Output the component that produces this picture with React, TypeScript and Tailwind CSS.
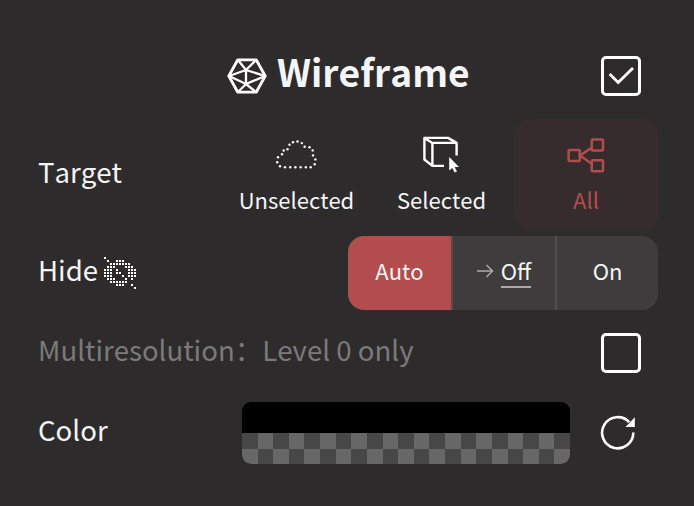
const EYE_OFF = [
  '#..........',
  '.#..###....',
  '..#######..',
  '.###.. ###.',
  '###.#...###',
  '###.##..###',
  '###...#.###',
  '.###...#.#.',
  '..######...',
  '....###..#.',
  '..........#',
];

function WireframeIcon() {
  return (
    <svg className="h-[36px] w-[40px]" viewBox="0 0 40 36" fill="none" stroke="#fff" strokeWidth="2.8" strokeLinejoin="round">
      <path d="M10.8 1.8H29.2L38.2 18L29.2 34.2H10.8L1.8 18Z" />
      <path strokeWidth="2.3" d="M11 2L19 12L29 2M11 34L19 26L29 34M2 18L19 12L38 18L19 26ZM19 12V26" />
    </svg>
  );
}

function CloudIcon() {
  const dots = [
    [21.5, 2.5], [17, 3.2], [13.5, 5.8], [11.5, 10.2], [7.7, 11.5], [6, 15.3], [2, 18.2], [1.2, 23.2], [4, 27.3], [9, 28.3],
    [14.2, 28.3], [19.4, 28.3], [24.6, 28.3], [29.8, 28.3], [34.7, 28.2], [38.7, 25.3], [39.4, 20.4], [37, 16.4],
    [36.7, 11.4], [33.5, 8.2], [28.6, 7.7], [25.8, 4.1],
  ];
  return (
    <svg className="h-[32px] w-[41px]" viewBox="0 0 41 32" fill="#fff">
      {dots.map(([x, y]) => <circle key={`${x}-${y}`} cx={x} cy={y} r="1.2" />)}
    </svg>
  );
}

function CubeIcon() {
  return (
    <svg className="h-[38px] w-[38px]" viewBox="0 0 38 38" fill="none" stroke="#fff" strokeWidth="2.4" strokeLinejoin="round">
      <path d="M33.6 19.5V6.9L25 1.9H1.4V23.5L9.4 29.9H21M1.4 1.9L9.4 6.9H33.6M9.4 6.9V29.9" />
      <path d="M26.2 21V34.6L29.3 32L31.6 36.6L34 35.5L31.6 31H36Z" fill="#fff" stroke="none" />
    </svg>
  );
}

function NodesIcon() {
  return (
    <svg className="h-[36px] w-[38px]" viewBox="0 0 38 36" fill="none" stroke="#b34d4d" strokeWidth="2.5">
      <rect x="1.6" y="12" width="11.2" height="11" rx="1" />
      <rect x="24.8" y="1.6" width="11.2" height="11" rx="1" />
      <rect x="24.8" y="22.2" width="11.2" height="11" rx="1" />
      <path d="M25 9.5L13 17.5L25 26" />
    </svg>
  );
}

function EyeOffIcon() {
  return (
    <svg className="h-[34px] w-[34px]" viewBox="0 0 34 34" fill="#fff" shapeRendering="crispEdges">
      {EYE_OFF.flatMap((row, y) =>
        row.split('').map((c, x) =>
          c === '#' ? <rect key={`${x}-${y}`} x={x * 3} y={y * 3} width="2" height="2" /> : null,
        ),
      )}
    </svg>
  );
}

function Checkbox({ checked }: { checked?: boolean }) {
  return (
    <span className="flex h-[40px] w-[40px] items-center justify-center rounded-[5px] border-[3px] border-white">
      {checked && (
        <svg className="h-[20px] w-[27px]" viewBox="0 0 27 20" fill="none" stroke="#fff" strokeWidth="2.8">
          <path d="M1.7 8L10.2 16.5L25 2" />
        </svg>
      )}
    </span>
  );
}

function ResetIcon() {
  return (
    <svg className="h-[36px] w-[36px]" viewBox="0 0 36 36" fill="none" stroke="#fff" strokeWidth="2.6">
      <path d="M33.3 17.5A15.6 15.6 0 1 1 29.2 7.2" />
      <path d="M34.8 2.3V12H25.5Z" fill="#fff" stroke="none" />
    </svg>
  );
}

export default function App() {
  return (
    <div className="h-[506px] w-[694px] overflow-hidden bg-[#2e2b2c] pr-[36px] pl-[38px] font-['Noto_Sans_CJK_SC','Noto_Sans',sans-serif] text-[27.6px] text-[#f5f5f5] [font-kerning:none]">
      <header className="flex h-[119px] items-start justify-between pt-[56px] pr-[17px]">
        <div className="ml-[189px] flex items-start">
          <span className="mt-[2px]"><WireframeIcon /></span>
          <h1 className="-mt-[13px] ml-[10px] text-[37.2px] leading-[56px] font-bold whitespace-nowrap">Wireframe</h1>
        </div>
        <Checkbox checked />
      </header>

      <section className="flex h-[117px]">
        <span className="w-[186px] pt-[32px] leading-[40px]">Target</span>
        <div className="flex h-[111px] flex-1 text-[22px]">
          <div className="flex w-[145px] flex-col items-center pt-[20px]">
            <CloudIcon />
            <span className="mt-[11px] leading-[34px]">Unselected</span>
          </div>
          <div className="flex w-[145px] flex-col items-center pt-[17px]">
            <CubeIcon />
            <span className="mt-[8px] leading-[34px]">Selected</span>
          </div>
          <div className="flex w-[144px] flex-col items-center rounded-[16px] bg-[#372c2d] pt-[19px] text-[#b34d4d]">
            <NodesIcon />
            <span className="mt-[8px] leading-[34px]">All</span>
          </div>
        </div>
      </section>

      <section className="flex h-[74px] justify-between">
        <div className="flex pt-[13px] leading-[40px]">
          <span className="w-[66px]">Hide</span>
          <span className="pt-[8px]"><EyeOffIcon /></span>
        </div>
        <div className="flex w-[310px] overflow-hidden rounded-[16px] bg-[#3e3c3d] text-[22px]">
          <span className="flex w-[103px] items-center justify-center bg-[#b34d4d] pb-[5px]">Auto</span>
          <span className="flex w-[104px] items-center justify-center border-l-2 border-[#504e4f] pb-[5px]">
            <svg className="mr-[7px] h-[14px] w-[17px]" viewBox="0 0 17 14" fill="none" stroke="#aaa" strokeWidth="1.5">
              <path d="M0 7H15.5M9.5 1L15.5 7L9.5 13" />
            </svg>
            <span className="mt-px h-[34px] border-b-2 border-[#aaa] leading-[33px]">Off</span>
          </span>
          <span className="flex w-[103px] items-center justify-center border-l-2 border-[#504e4f] pb-[5px]">On</span>
        </div>
      </section>

      <section className="flex h-[92px] justify-between pr-[17px]">
        <span className="pt-[19px] leading-[40px] text-[#7b7a7a]">Multiresolution：Level 0 only</span>
        <span className="pt-[23px]"><Checkbox /></span>
      </section>

      <section className="flex">
        <span className="w-[204px] pt-[7px] leading-[40px]">Color</span>
        <div className="h-[62px] w-[328px] overflow-hidden rounded-[9px] bg-black pt-[31px]">
          <div className="grid h-[31px] grid-cols-21 grid-rows-[16px_15px]">
            {Array.from({ length: 42 }, (_, i) => (
              <i key={i} className={i % 2 ? 'bg-[#676767]' : 'bg-[#474747]'} />
            ))}
          </div>
        </div>
        <span className="ml-[30px] pt-[13px]"><ResetIcon /></span>
      </section>
    </div>
  );
}
